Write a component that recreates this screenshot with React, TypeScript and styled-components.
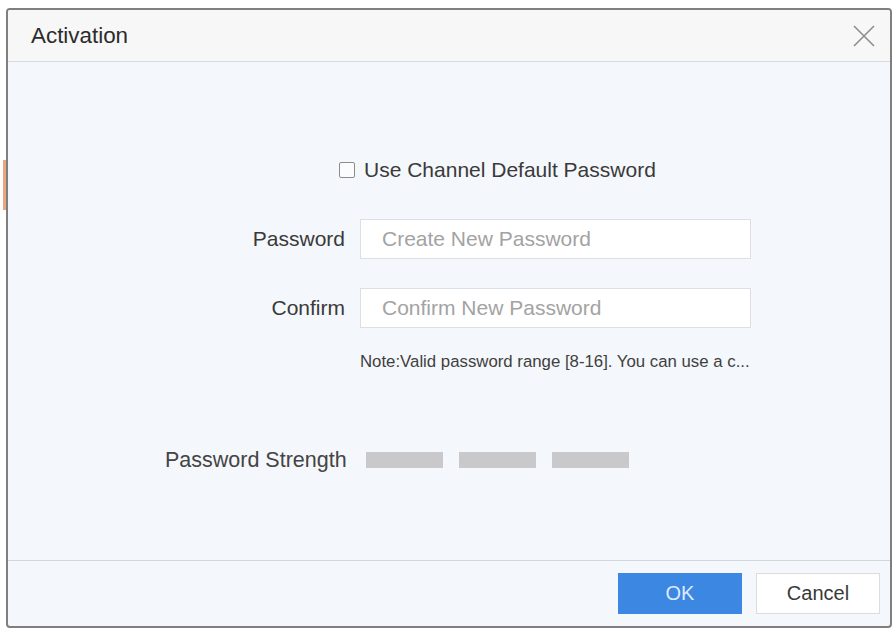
import * as React from "react";
import styled, { createGlobalStyle } from "styled-components";

const GlobalStyle = createGlobalStyle`
  html, body {
    margin: 0;
    padding: 0;
    background: #ffffff;
  }
  body {
    font-family: "Liberation Sans", Arial, sans-serif;
  }
`;

const Page = styled.div`
  position: relative;
  width: 895px;
  height: 631px;
  padding: 8px 3px 3px 6px;
  box-sizing: border-box;
  overflow: hidden;
`;

// piece of the app behind the dialog peeking out on the left
const SideMark = styled.div`
  position: absolute;
  left: 3px;
  top: 160px;
  width: 4px;
  height: 50px;
  background: #e9a77c;
`;

const SDialog = styled.div`
  position: relative;
  display: flex;
  flex-direction: column;
  width: 886px;
  height: 620px;
  box-sizing: border-box;
  border: 2px solid #7f7f7f;
  border-radius: 4px;
  background: #f4f7fb;
  overflow: hidden;
`;

const SHeader = styled.div`
  display: flex;
  align-items: center;
  justify-content: space-between;
  height: 51px;
  padding: 0 12px 0 23px;
  background: #f7f7f8;
  border-bottom: 1px solid #d6d9de;
  flex: 0 0 auto;
`;

const STitle = styled.div`
  font-size: 22.4px;
  color: #2b2b2b;
`;

const SClose = styled.button`
  display: flex;
  align-items: center;
  justify-content: center;
  width: 28px;
  height: 28px;
  padding: 0;
  border: none;
  background: transparent;
  cursor: pointer;
`;

const SBody = styled.div`
  flex: 1 1 auto;
  padding-top: 96px;
`;

const SCheckRow = styled.label`
  display: flex;
  align-items: center;
  gap: 9px;
  height: 24px;
  padding-left: 331px;
  font-size: 21px;
  color: #3a3a3a;
  cursor: pointer;
`;

const SCheckbox = styled.span`
  width: 14px;
  height: 14px;
  border: 1.5px solid #8c8c8c;
  border-radius: 2px;
  background: #fbfcfd;
`;

const SForm = styled.div`
  display: grid;
  grid-template-columns: 337px 391px;
  column-gap: 15px;
  row-gap: 29px;
  margin-top: 37px;
`;

const SLabel = styled.div`
  display: flex;
  align-items: center;
  justify-content: flex-end;
  font-size: 21px;
  color: #3a3a3a;
`;

const SInput = styled.input`
  height: 40px;
  box-sizing: border-box;
  padding: 0 21px;
  border: 1px solid #dcdfe4;
  background: #ffffff;
  font-family: inherit;
  font-size: 21px;
  color: #333;
  outline: none;

  &::placeholder {
    color: #a3a3a3;
  }
`;

const SNote = styled.div`
  margin: 25px 0 0 352px;
  height: 18px;
  line-height: 18px;
  font-size: 16.8px;
  color: #3f3f3f;
  white-space: nowrap;
`;

const SStrengthRow = styled.div`
  display: flex;
  align-items: center;
  height: 24px;
  margin: 77px 0 0 157px;
  font-size: 21.5px;
  color: #444;
`;

const SBars = styled.div`
  display: flex;
  gap: 16px;
  margin-left: 19px;
`;

const SBar = styled.span`
  width: 77px;
  height: 16px;
  background: #c9c9cb;
`;

const SFooter = styled.div`
  display: flex;
  justify-content: flex-end;
  gap: 14px;
  flex: 0 0 auto;
  height: 66px;
  box-sizing: border-box;
  padding: 12px 10px 0 0;
  border-top: 1px solid #d3d7dc;
`;

interface IButtonProps {
  primary?: boolean;
}

const SButton = styled.button<IButtonProps>`
  width: 124px;
  height: 41px;
  box-sizing: border-box;
  font-family: inherit;
  font-size: 20px;
  border: 1px solid ${(props) => (props.primary ? "#3b87e2" : "#dcdcdc")};
  background: ${(props) => (props.primary ? "#3b87e2" : "#ffffff")};
  color: ${(props) => (props.primary ? "#dfeafb" : "#3a3a3a")};
  cursor: pointer;
`;

const CloseIcon = () => (
  <svg width="24" height="24" viewBox="0 0 24 24">
    <path
      d="M2 2 L22 22 M22 2 L2 22"
      stroke="#8e8e8e"
      strokeWidth="1.6"
      fill="none"
    />
  </svg>
);

const App = () => {
  const [useDefault, setUseDefault] = React.useState(false);

  return (
    <>
      <GlobalStyle />
      <Page>
        <SideMark />
        <SDialog>
          <SHeader>
            <STitle>Activation</STitle>
            <SClose aria-label="Close">
              <CloseIcon />
            </SClose>
          </SHeader>
          <SBody>
            <SCheckRow onClick={() => setUseDefault(!useDefault)}>
              <SCheckbox />
              Use Channel Default Password
            </SCheckRow>
            <SForm>
              <SLabel>Password</SLabel>
              <SInput type="password" placeholder="Create New Password" />
              <SLabel>Confirm</SLabel>
              <SInput type="password" placeholder="Confirm New Password" />
            </SForm>
            <SNote>Note:Valid password range [8-16]. You can use a c...</SNote>
            <SStrengthRow>
              Password Strength
              <SBars>
                <SBar />
                <SBar />
                <SBar />
              </SBars>
            </SStrengthRow>
          </SBody>
          <SFooter>
            <SButton primary>OK</SButton>
            <SButton>Cancel</SButton>
          </SFooter>
        </SDialog>
      </Page>
    </>
  );
};

export default App;
